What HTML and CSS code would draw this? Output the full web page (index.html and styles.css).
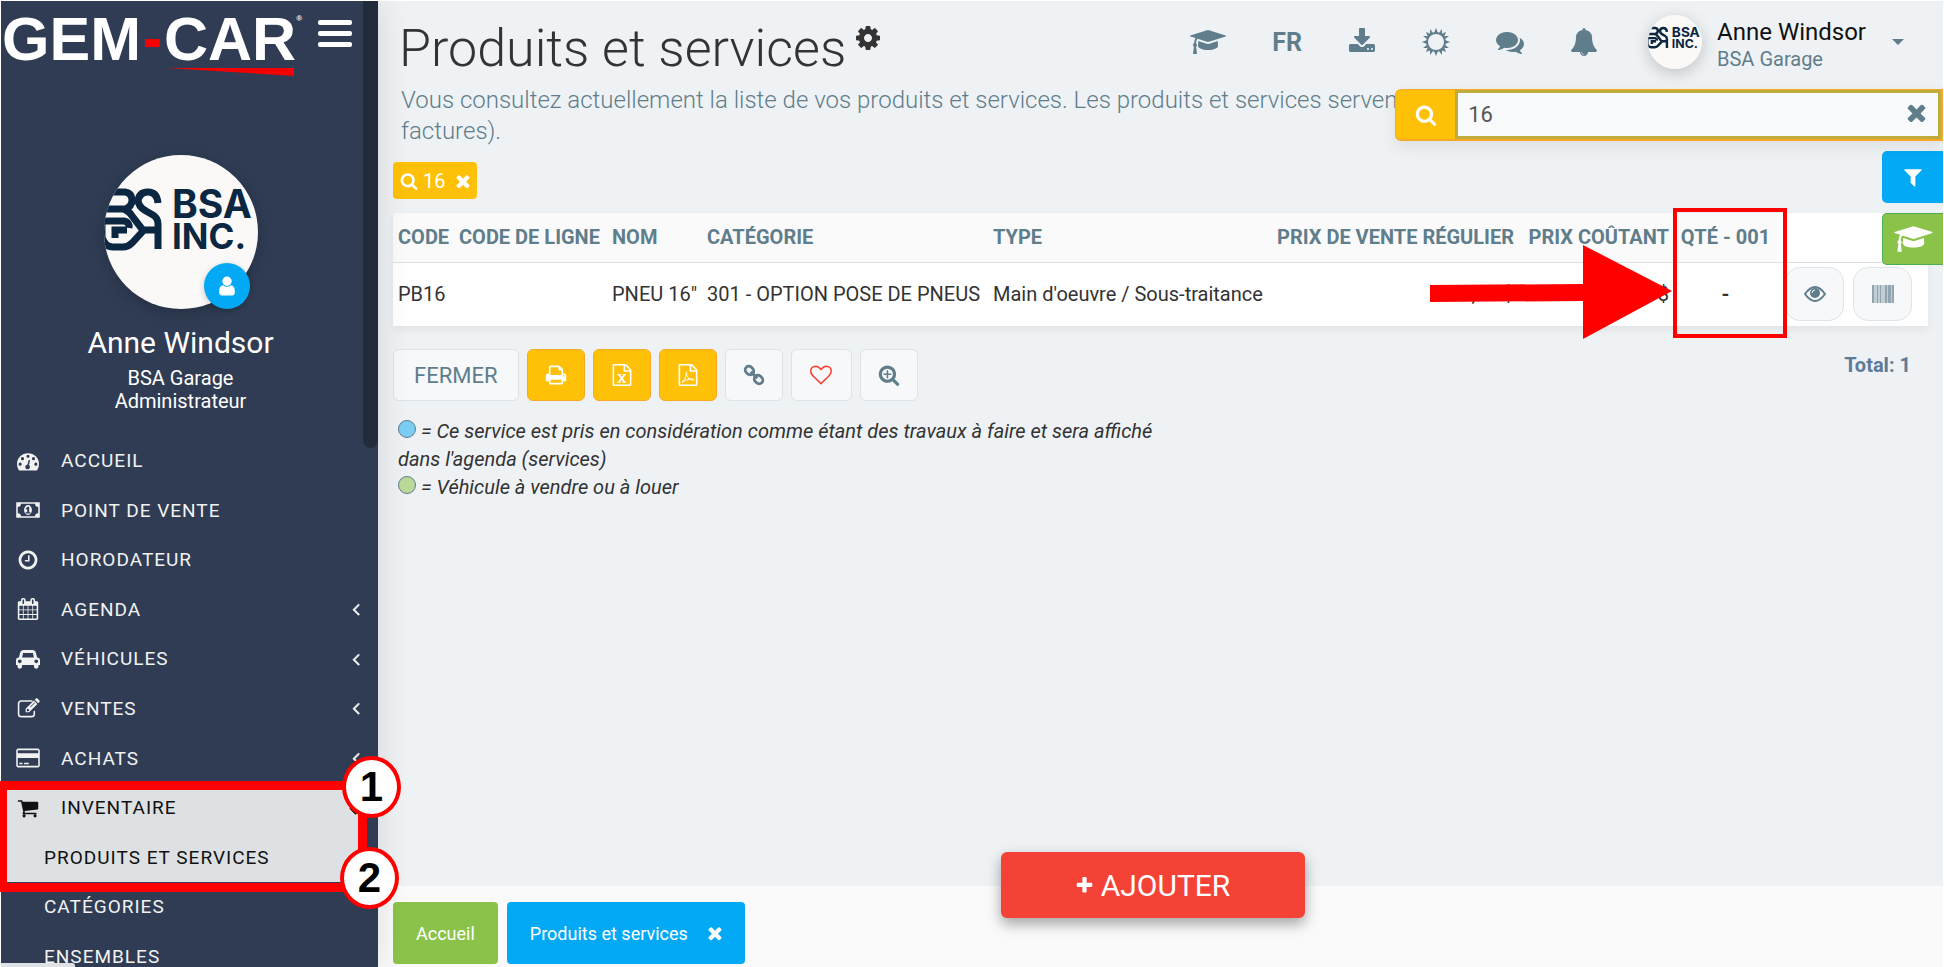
FILE: index.html
```html
<!DOCTYPE html>
<html lang="fr">
<head>
    <meta charset="UTF-8">
    <meta name="viewport" content="width=device-width, initial-scale=1.0">
    <title>GEM-CAR - Produits et services</title>
    <link rel="stylesheet" href="styles.css">
</head>
<body>
    <!-- Shared icons -->
    <svg class="sprite" aria-hidden="true">
        <symbol id="i-search" viewBox="0 0 1792 1792"><path d="M1216 832q0-185-131.500-316.500t-316.500-131.500-316.500 131.500-131.500 316.500 131.500 316.500 316.500 131.500 316.500-131.500 131.500-316.500zm512 832q0 52-38 90t-90 38q-54 0-90-38l-343-342q-179 124-399 124-143 0-273.500-55.500t-225-150-150-225-55.500-273.500 55.500-273.500 150-225 225-150 273.500-55.500 273.500 55.500 225 150 150 225 55.500 273.500q0 220-124 399l343 343q37 37 37 90z"/></symbol>
        <symbol id="i-times" viewBox="256 256 1280 1280"><path d="M1490 1322q0 40-28 68l-136 136q-28 28-68 28t-68-28l-294-294-294 294q-28 28-68 28t-68-28l-136-136q-28-28-28-68t28-68l294-294-294-294q-28-28-28-68t28-68l136-136q28-28 68-28t68 28l294 294 294-294q28-28 68-28t68 28l136 136q28 28 28 68t-28 68l-294 294 294 294q28 28 28 68z"/></symbol>
        <symbol id="i-cap" viewBox="0 0 2304 1792"><path d="M1774 836l18 316q4 69-82 128t-235 93.500-323 34.500-323-34.500-235-93.500-82-128l18-316 574 181q22 7 48 7t48-7zm530-324q0 23-22 31l-1120 352q-4 1-10 1t-10-1l-652-206q-43 34-71 111.500t-34 178.500q63 36 63 109 0 69-58 107l58 433q2 14-8 25-9 11-24 11h-192q-15 0-24-11-10-11-8-25l58-433q-58-38-58-107 0-73 65-111 11-207 98-330l-333-104q-22-8-22-31t22-31l1120-352q4-1 10-1t10 1l1120 352q22 8 22 31z"/></symbol>
        <symbol id="i-left" viewBox="0 0 1792 1792"><path stroke="currentColor" stroke-width="60" d="M1203 544q0 13-10 23l-393 393 393 393q10 10 10 23t-10 23l-50 50q-10 10-23 10t-23-10l-466-466q-10-10-10-23t10-23l466-466q10-10 23-10t23 10l50 50q10 10 10 23z"/></symbol>
        <symbol id="i-file" viewBox="0 0 1792 1792"><path d="M1596 380q28 28 48 76t20 88v1152q0 40-28 68t-68 28h-1344q-40 0-68-28t-28-68v-1600q0-40 28-68t68-28h896q40 0 88 20t76 48zm-444-244v376h376q-10-29-22-41l-313-313q-12-12-41-22zm384 1528v-1024h-416q-40 0-68-28t-28-68v-416h-768v1536h1280z"/></symbol>
        <symbol id="i-bsa" viewBox="0 0 154 154">
            <rect width="154" height="154" fill="#faf9f7"/>
            <g fill="none" stroke="#0b2742" stroke-width="7">
                <path d="M4 37h17q7 1 7 8t-7 9H0M20 54q6 3 8 7l10 13M0 66h20q6 1 5 7"/>
                <path d="M34 48q0-11 10-11 9 0 10 11M34 44q0 8 8 12l7 4q5 3 5 9v25"/>
                <path d="M54 75H40L28 88q-4 4-9 4H9q-8 0-11-10V64M11 83v-8h12"/>
            </g>
        </symbol>
    </svg>

    <aside class="sidebar">
        <div class="brand">
            <a href="#" class="logo"><span>GEM</span><i></i><span>CAR</span><sup>®</sup></a>
            <button class="menu-toggle" aria-label="Menu"><span></span><span></span><span></span></button>
        </div>

        <!-- Profile -->
        <div class="profile">
            <div class="profile-picture">
                <svg class="avatar" viewBox="0 0 154 154">
                    <use href="#i-bsa"/>
                    <text x="68" y="63" class="bsa-text bsa-top">BSA</text>
                    <text x="68" y="94" class="bsa-text">INC.</text>
                </svg>
                <button class="profile-edit" aria-label="Profil">
                    <svg viewBox="0 0 1792 1792"><path d="M1536 1399q0 109-62.500 187t-150.500 78h-854q-88 0-150.500-78t-62.500-187q0-85 8.500-160.500t31.500-152 58.500-131 94-89 134.500-34.500q131 128 313 128t313-128q76 0 134.500 34.500t94 89 58.500 131 31.500 152 8.500 160.500zm-256-887q0 159-112.500 271.500t-271.500 112.500-271.500-112.500-112.500-271.500 112.500-271.500 271.500-112.500 271.500 112.500 112.500 271.500z"/></svg>
                </button>
            </div>
            <div class="profile-name">Anne Windsor</div>
            <div class="profile-info">BSA Garage</div>
            <div class="profile-info">Administrateur</div>
        </div>

        <!-- Navigation -->
        <nav class="nav">
            <a href="#">
                <svg viewBox="0 0 1792 1792"><path fill-rule="evenodd" d="M0 1152a896 896 0 0 1 1792 0q0 261-141 483-19 29-54 29H195q-35 0-54-29Q0 1414 0 1152zM256 1024a128 128 0 1 0 0 256 128 128 0 1 0 0-256zM448 576a128 128 0 1 0 0 256 128 128 0 1 0 0-256zM896 384a128 128 0 1 0 0 256 128 128 0 1 0 0-256zM1344 576a128 128 0 1 0 0 256 128 128 0 1 0 0-256zM1536 1024a128 128 0 1 0 0 256 128 128 0 1 0 0-256zM950 810l-101 382a192 192 0 1 0 124 33l101-382z"/></svg>
                Accueil
            </a>
            <a href="#">
                <svg viewBox="0 0 1920 1792"><path fill-rule="evenodd" d="M0 256h1920v1280H0zM384 384q0 256-256 256v512q256 0 256 256h1152q0-256 256-256V640q-256 0-256-256zM960 480a320 416 0 1 0 0 832 320 416 0 1 0 0-832zM768 768l160-128h128v448h96v96H768v-96h128V800l-64 48z"/></svg>
                Point de vente
            </a>
            <a href="#">
                <svg viewBox="0 0 1792 1792"><path d="M1024 544v448q0 14-9 23t-23 9h-320q-14 0-23-9t-9-23v-64q0-14 9-23t23-9h224v-352q0-14 9-23t23-9h64q14 0 23 9t9 23zm416 352q0-148-73-273t-198-198-273-73-273 73-198 198-73 273 73 273 198 198 273 73 273-73 198-198 73-273zm224 0q0 209-103 385.500t-279.500 279.500-385.500 103-385.500-103-279.500-279.500-103-385.500 103-385.500 279.500-279.500 385.500-103 385.500 103 279.500 279.500 103 385.500z"/></svg>
                Horodateur
            </a>
            <a href="#">
                <svg viewBox="0 0 1792 1792"><path d="M192 1664h288v-288h-288v288zm352 0h320v-288h-320v288zm-352-352h288v-320h-288v320zm352 0h320v-320h-320v320zm-352-384h288v-288h-288v288zm736 736h320v-288h-320v288zm-384-736h320v-288h-320v288zm768 736h288v-288h-288v288zm-384-352h320v-320h-320v320zm-352-864v-288q0-13-9.500-22.500t-22.500-9.500h-64q-13 0-22.500 9.500t-9.500 22.500v288q0 13 9.500 22.500t22.500 9.500h64q13 0 22.500-9.500t9.500-22.500zm736 864h288v-320h-288v320zm-384-384h320v-288h-320v288zm384 0h288v-288h-288v288zm32-480v-288q0-13-9.500-22.500t-22.500-9.500h-64q-13 0-22.500 9.500t-9.500 22.500v288q0 13 9.500 22.500t22.500 9.500h64q13 0 22.500-9.500t9.500-22.500zm384-64v1280q0 52-38 90t-90 38h-1408q-52 0-90-38t-38-90v-1280q0-52 38-90t90-38h128v-96q0-66 47-113t113-47h64q66 0 113 47t47 113v96h384v-96q0-66 47-113t113-47h64q66 0 113 47t47 113v96h128q52 0 90 38t38 90z"/></svg>
                Agenda
                <svg class="arrow"><use href="#i-left"/></svg>
            </a>
            <a href="#">
                <svg viewBox="0 0 2048 1792"><path d="M480 1088q0-66-47-113t-113-47-113 47-47 113 47 113 113 47 113-47 47-113zm36-320h1016l-89-357q-2-8-14-17.500t-21-9.500h-768q-9 0-21 9.500t-14 17.500zm1372 320q0-66-47-113t-113-47-113 47-47 113 47 113 113 47 113-47 47-113zm160-96v384q0 14-9 23t-23 9h-96v128q0 80-56 136t-136 56-136-56-56-136v-128h-1024v128q0 80-56 136t-136 56-136-56-56-136v-128h-96q-14 0-23-9t-9-23v-384q0-93 65.500-158.500t158.500-65.500h28l105-419q23-94 104-157.500t179-63.500h768q98 0 179 63.500t104 157.500l105 419h28q93 0 158.500 65.500t65.500 158.500z"/></svg>
                Véhicules
                <svg class="arrow"><use href="#i-left"/></svg>
            </a>
            <a href="#">
                <svg viewBox="0 0 1792 1792"><path fill="none" stroke="currentColor" stroke-width="128" stroke-linecap="round" d="M1216 320H352q-224 0-224 224v832q0 224 224 224h832q224 0 224-224v-190"/><path fill-rule="evenodd" d="M1372 292l288 288-672 672H700V964zM1420 452l-350 350 40 40 350-350zM800 1010v142h142l70-70-142-142zM1444 220l92-92q28-28 68-28t68 28l152 152q28 28 28 68t-28 68l-92 92z"/></svg>
                Ventes
                <svg class="arrow"><use href="#i-left"/></svg>
            </a>
            <a href="#">
                <svg viewBox="0 0 1920 1792"><path d="M1760 128q66 0 113 47t47 113v1216q0 66-47 113t-113 47h-1600q-66 0-113-47t-47-113v-1216q0-66 47-113t113-47h1600zm-1600 128q-13 0-22.500 9.500t-9.500 22.500v224h1664v-224q0-13-9.500-22.500t-22.500-9.500h-1600zm1600 1280q13 0 22.500-9.500t9.500-22.500v-608h-1664v608q0 13 9.500 22.500t22.500 9.500h1600zm-1504-128v-128h256v128h-256zm384 0v-128h384v128h-384z"/></svg>
                Achats
                <svg class="arrow"><use href="#i-left"/></svg>
            </a>
            <a href="#" class="active">
                <svg viewBox="0 0 1792 1792"><path d="M704 1536q0 52-38 90t-90 38-90-38-38-90 38-90 90-38 90 38 38 90zm896 0q0 52-38 90t-90 38-90-38-38-90 38-90 90-38 90 38 38 90zm128-1088v512q0 24-16.500 42.500t-40.500 21.500l-1044 122q13 60 13 70 0 16-24 64h920q26 0 45 19t19 45-19 45-45 19h-1024q-26 0-45-19t-19-45q0-11 8-31.500t16-36 21.500-40 15.500-29.500l-177-823h-204q-26 0-45-19t-19-45 19-45 45-19h256q16 0 28.500 6.500t19.500 15.500 13 24.500 8 26 5.500 29.500 4.500 26h1201q26 0 45 19t19 45z"/></svg>
                Inventaire
                <svg class="arrow"><use href="#i-left"/></svg>
            </a>
            <a href="#" class="sub active">Produits et services</a>
            <a href="#" class="sub">Catégories</a>
            <a href="#" class="sub">Ensembles</a>
            <div class="nav-highlight"></div>
            <span class="step step-one">1</span>
            <span class="step step-two">2</span>
        </nav>
        <div class="sidebar-scroll"></div>
        <div class="status-bar"></div>
    </aside>

    <main class="main">
        <header class="header">
            <h1>Produits et services <svg viewBox="0 0 1792 1792"><path d="M1152 896q0-106-75-181t-181-75-181 75-75 181 75 181 181 75 181-75 75-181zm512-109v222q0 12-8 23t-20 13l-185 28q-19 54-39 91 35 50 107 138 10 12 10 25t-9 23q-27 37-99 108t-94 71q-12 0-26-9l-138-108q-44 23-91 38-16 136-29 186-7 28-36 28h-222q-14 0-24.500-8.500t-11.500-21.500l-28-184q-49-16-90-37l-141 107q-10 9-25 9-14 0-25-11-126-114-165-168-7-10-7-23 0-12 8-23 15-21 51-66.500t54-70.500q-27-50-41-99l-183-27q-13-2-21-12.500t-8-23.500v-222q0-12 8-23t19-13l186-28q14-46 39-92-40-57-107-138-10-12-10-24 0-10 9-23 26-36 98.500-107.500t94.500-71.500q13 0 26 10l138 107q44-23 91-38 16-136 29-186 7-28 36-28h222q14 0 24.500 8.500t11.500 21.500l28 184q49 16 90 37l142-107q9-9 24-9 13 0 25 10 129 119 165 170 7 8 7 22 0 12-8 23-15 21-51 66.500t-54 70.500q26 50 41 98l183 28q13 2 21 12.500t8 23.500z"/></svg></h1>
            <div class="top-menu">
                <a href="#" aria-label="Formation"><svg class="wide" viewBox="0 0 2304 1792"><use href="#i-cap"/></svg></a>
                <a href="#" class="lang">FR</a>
                <a href="#" aria-label="Téléchargements"><svg viewBox="0 0 1792 1792"><path d="M1344 1344q0-26-19-45t-45-19-45 19-19 45 19 45 45 19 45-19 19-45zm256 0q0-26-19-45t-45-19-45 19-19 45 19 45 45 19 45-19 19-45zm128-224v320q0 40-28 68t-68 28h-1472q-40 0-68-28t-28-68v-320q0-40 28-68t68-28h465l135 136q58 56 136 56t136-56l136-136h464q40 0 68 28t28 68zm-325-569q17 41-14 70l-448 448q-18 19-45 19t-45-19l-448-448q-31-29-14-70 17-39 59-39h256v-448q0-26 19-45t45-19h256q26 0 45 19t19 45v448h256q42 0 59 39z"/></svg></a>
                <a href="#" aria-label="Thème"><svg viewBox="0 0 28 28"><circle cx="14" cy="14" r="9" fill="none" stroke="currentColor" stroke-width="2"/><path d="M14 0l2 5h-4zM14 28l2-5h-4zM0 14l5-2v4zM28 14l-5-2v4zM4 4l5 2-3 3zM24 4l-5 2 3 3zM4 24l5-2-3-3zM24 24l-5-2 3-3zM8 1l3 4-3 2zM20 1l-3 4 3 2zM8 27l3-4-3-2zM20 27l-3-4 3-2zM1 8l4 3 2-3zM27 8l-4 3-2-3zM1 20l4-3 2 3zM27 20l-4-3-2 3z"/></svg></a>
                <a href="#" aria-label="Messages"><svg viewBox="0 0 1792 1792"><path d="M1408 768q0 139-94 257t-256.500 186.500-353.500 68.500q-86 0-176-16-124 88-278 128-36 9-86 16h-3q-11 0-20.500-8t-11.500-21q-1-3-1-6.500t.5-6.500 2-6l2.500-5 3.500-5.500 4-5 4.500-5 4-4.500q5-6 23-25t26-29.500 22.500-29 25-38.500 20.500-44q-124-72-195-177t-71-224q0-139 94-257t256.500-186.500 353.500-68.500 353.500 68.500 256.500 186.500 94 257zm384 256q0 120-71 224.500t-195 176.500q10 24 20.500 44t25 38.500 22.500 29 26 29.500 23 25q1 1 4 4.500t4.500 5 4 5 3.500 5.500l2.500 5 2 6 .5 6.500-1 6.500q-3 14-13 22t-22 7q-50-7-86-16-154-40-278-128-90 16-176 16-271 0-472-132 58 4 88 4 161 0 309-45t264-129q125-92 192-212t67-254q0-77-23-152 129 71 204 178t75 230z"/></svg></a>
                <a href="#" aria-label="Notifications"><svg viewBox="0 0 1792 1792"><path d="M912 1696q0-16-16-16-59 0-101.500-42.500t-42.500-101.500q0-16-16-16t-16 16q0 73 51.500 124.500t124.500 51.500q16 0 16-16zm816-288q0 52-38 90t-90 38h-448q0 106-75 181t-181 75-181-75-75-181h-448q-52 0-90-38t-38-90q50-42 91-88t85-119.500 74.500-158.500 50-206 19.500-260q0-152 117-282.500t307-158.500q-8-19-8-39 0-40 28-68t68-28 68 28 28 68q0 20-8 39 190 28 307 158.500t117 282.500q0 139 19.500 260t50 206 74.500 158.500 85 119.500 91 88z"/></svg></a>
                <a href="#" class="account">
                    <svg class="avatar" viewBox="0 0 154 154">
                        <use href="#i-bsa"/>
                        <text x="68" y="63" class="bsa-text bsa-top">BSA</text>
                        <text x="68" y="94" class="bsa-text">INC.</text>
                    </svg>
                    <span class="account-text"><strong>Anne Windsor</strong><small>BSA Garage</small></span>
                    <span class="caret"></span>
                </a>
            </div>
        </header>

        <p class="description">Vous consultez actuellement la liste de vos produits et services. Les produits et services servent<br>factures).</p>

        <button class="chip"><svg><use href="#i-search"/></svg>16<svg class="chip-close"><use href="#i-times"/></svg></button>

        <!-- Search and side buttons -->
        <div class="side-tools">
            <form class="search">
                <button type="button" class="search-button" aria-label="Rechercher"><svg><use href="#i-search"/></svg></button>
                <input type="text" value="16" aria-label="Recherche">
                <button type="button" class="search-clear" aria-label="Effacer"><svg><use href="#i-times"/></svg></button>
            </form>
            <button class="side-button" aria-label="Filtres"><svg viewBox="0 0 1792 1792"><path d="M1595 295q17 41-14 70l-493 493v742q0 42-39 59-13 5-25 5-27 0-45-19l-256-256q-19-19-19-45v-486l-493-493q-31-29-14-70 17-39 59-39h1280q42 0 59 39z"/></svg></button>
            <button class="side-button green" aria-label="Aide"><svg viewBox="0 0 2304 1792"><use href="#i-cap"/></svg></button>
        </div>

        <!-- Products -->
        <div class="table-wrap">
            <table>
                <colgroup>
                    <col class="c-code"><col class="c-line"><col class="c-name"><col class="c-cat"><col><col class="c-price"><col class="c-cost"><col class="c-qty"><col class="c-actions">
                </colgroup>
                <thead>
                    <tr>
                        <th>CODE</th>
                        <th>CODE DE LIGNE</th>
                        <th>NOM</th>
                        <th>CATÉGORIE</th>
                        <th>TYPE</th>
                        <th class="right">PRIX DE VENTE RÉGULIER</th>
                        <th class="right">PRIX COÛTANT</th>
                        <th class="center">QTÉ - 001</th>
                        <td></td>
                    </tr>
                </thead>
                <tbody>
                    <tr>
                        <td>PB16</td>
                        <td></td>
                        <td>PNEU 16"</td>
                        <td>301 - OPTION POSE DE PNEUS</td>
                        <td>Main d'oeuvre / Sous-traitance</td>
                        <td class="right">0,00 $</td>
                        <td class="right">0,00 $</td>
                        <td class="center"><b>-</b></td>
                        <td>
                            <div class="actions">
                                <button aria-label="Voir"><svg viewBox="0 0 24 18"><path fill="none" stroke="currentColor" stroke-width="2" d="M2 9Q12-5 22 9 12 23 2 9z"/><circle cx="12" cy="8" r="5"/><path fill="none" stroke="#f7f8fa" d="M9 8q0-3 3-3"/></svg></button>
                                <button aria-label="Code-barres"><svg viewBox="0 0 24 18"><path opacity=".35" d="M1 0h22v18H1z"/><path opacity=".5" d="M1 0h2v18H1zM6 0h1v18H6zM9 0h1v18H9zM14 0h2v18h-2zM17 0h3v18h-3zM21 0h2v18h-2z"/></svg></button>
                            </div>
                        </td>
                    </tr>
                </tbody>
            </table>
            <svg class="mark-arrow" viewBox="0 0 242 94"><path d="M0 40l153-1V0l89 46-89 48V56l-153 1z"/></svg>
            <div class="mark-box"></div>
        </div>

        <div class="toolbar">
            <button class="btn close">FERMER</button>
            <button class="btn yellow" aria-label="Imprimer"><svg viewBox="0 0 1792 1792"><path d="M448 1536h896v-256h-896v256zm0-640h896v-384h-160q-40 0-68-28t-28-68v-160h-640v640zm1152 64q0-26-19-45t-45-19-45 19-19 45 19 45 45 19 45-19 19-45zm128 0v416q0 13-9.500 22.500t-22.500 9.500h-224v160q0 40-28 68t-68 28h-960q-40 0-68-28t-28-68v-160h-224q-13 0-22.500-9.500t-9.500-22.500v-416q0-79 56.500-135.500t135.500-56.500h64v-544q0-40 28-68t68-28h672q40 0 88 20t76 48l152 152q28 28 48 76t20 88v256h64q79 0 135.500 56.500t56.500 135.500z"/></svg></button>
            <button class="btn yellow" aria-label="Excel"><svg viewBox="0 0 1792 1792"><use href="#i-file"/><path fill="none" stroke="currentColor" stroke-width="150" d="M640 860l460 620M1110 860l-460 620"/><path fill="none" stroke="currentColor" stroke-width="90" d="M500 850h320M960 850h260M500 1490h280M920 1490h320"/></svg></button>
            <button class="btn yellow" aria-label="PDF"><svg viewBox="0 0 1792 1792"><use href="#i-file"/><path fill="none" stroke="currentColor" stroke-width="80" d="M400 1500q250-150 400-700 20-120-30-120-60 0-30 140 80 370 440 480 180 50 200-20-20-90-360-40-360 50-620 260z"/></svg></button>
            <button class="btn" aria-label="Lien"><svg viewBox="0 0 24 24"><g fill="none" stroke="currentColor" stroke-width="3" transform="rotate(45 12 12)"><rect x="0" y="8" width="10" height="8" rx="4"/><rect x="14" y="8" width="10" height="8" rx="4"/><path d="M7 12h10"/></g></svg></button>
            <button class="btn heart" aria-label="Favori"><svg viewBox="0 0 1792 1792"><path d="M1664 596q0-81-21.500-143t-55-98.500-81.500-59.500-94-31-98-8-112 25.500-110.500 64-86.500 72-60 61.500q-18 22-49 22t-49-22q-24-28-60-61.500t-86.500-72-110.500-64-112-25.500-98 8-94 31-81.500 59.500-55 98.500-21.500 143q0 168 187 355l581 560 580-559q188-188 188-356zm128 0q0 221-229 450l-623 600q-18 18-44 18t-44-18l-624-602q-10-8-27.500-26t-55.500-65.500-68-97.500-53.500-121-23.500-138q0-220 127-344t351-124q62 0 126.500 21.500t120 58 95.500 68.500 76 68q36-36 76-68t95.500-68.500 120-58 126.500-21.500q224 0 351 124t127 344z"/></svg></button>
            <button class="btn" aria-label="Zoom"><svg viewBox="0 0 1792 1792"><use href="#i-search"/><path d="M704 512h128v256h256v128H832v256H704V896H448V768h256z"/></svg></button>
            <span class="total">Total: 1</span>
        </div>

        <div class="legend">
            <div><i class="dot blue"></i> = Ce service est pris en considération comme étant des travaux à faire et sera affiché dans l'agenda (services)</div>
            <div><i class="dot lime"></i> = Véhicule à vendre ou à louer</div>
        </div>

        <footer class="footer">
            <a href="#" class="tab green">Accueil</a>
            <a href="#" class="tab">Produits et services <svg><use href="#i-times"/></svg></a>
            <div class="add-wrap">
                <button class="add"><svg viewBox="128 128 1536 1536"><path d="M1600 736v192q0 40-28 68t-68 28h-416v416q0 40-28 68t-68 28h-192q-40 0-68-28t-28-68v-416h-416q-40 0-68-28t-28-68v-192q0-40 28-68t68-28h416v-416q0-40 28-68t68-28h192q40 0 68 28t28 68v416h416q40 0 68 28t28 68z"/></svg>AJOUTER</button>
            </div>
        </footer>
    </main>
</body>
</html>
```
FILE: styles.css
```css
* {
    box-sizing: border-box;
}

body {
    margin: 0;
    display: flex;
    min-height: 100vh;
    background-color: #eef2f5;
    color: #333;
    font-family: Roboto, "Liberation Sans", sans-serif;
    font-size: 20px;
}

a {
    color: inherit;
    text-decoration: none;
}

button {
    border: none;
    padding: 0;
    font-family: inherit;
    color: inherit;
    cursor: pointer;
}

svg {
    fill: currentColor;
    flex-shrink: 0;
}

.sprite {
    position: absolute;
    width: 0;
    height: 0;
}

.bsa-text {
    font: bold 35px Inter, "Liberation Sans", sans-serif;
    fill: #0b2742;
}

.bsa-top {
    font-size: 39px;
}

/* Sidebar */
.sidebar {
    position: relative;
    width: 378px;
    height: 100vh;
    flex-shrink: 0;
    background-color: #2f3c53;
    color: #fff;
    box-shadow: 0 0 30px rgba(0, 0, 0, 0.12);
    z-index: 2;
    border-left: 1px solid #fff;
    border-top: 1px solid #fff;
}

.brand {
    display: flex;
    justify-content: space-between;
    padding: 8px 26px 0 1px;
    height: 100px;
}

.logo {
    position: relative;
    display: flex;
    align-items: flex-start;
    height: 67px;
    font: bold 61px/60px "Liberation Sans", Arial, sans-serif;
}

.logo i {
    width: 15px;
    height: 8px;
    margin: 30px 4px 0 4px;
    background-color: #f40000;
}

.logo sup {
    font-size: 8px;
    line-height: 20px;
}

.logo::after {
    content: "";
    position: absolute;
    right: 8px;
    bottom: 0;
    width: 128px;
    height: 8px;
    background-color: #f40000;
    clip-path: polygon(0 0, 100% 0, 100% 100%);
}

.menu-toggle {
    display: flex;
    flex-direction: column;
    gap: 6px;
    margin-top: 11px;
    background: none;
    height: 27px;
}

.menu-toggle span {
    width: 34px;
    height: 5px;
    border-radius: 2px;
    background-color: #fff;
}

.profile {
    padding: 54px 18px 0 0;
    text-align: center;
}

.profile-picture {
    position: relative;
    width: 154px;
    margin: 0 auto;
}

.avatar {
    display: block;
    width: 154px;
    height: 154px;
    border-radius: 50%;
    box-shadow: 0 4px 16px rgba(0, 0, 0, 0.2);
}

.profile-edit {
    position: absolute;
    right: 8px;
    bottom: 0;
    width: 46px;
    height: 46px;
    border-radius: 50%;
    background-color: #03a9f4;
    color: #fff;
    box-shadow: 0 2px 6px rgba(0, 0, 0, 0.2);
}

.profile-edit svg {
    width: 22px;
    height: 22px;
    vertical-align: middle;
}

.profile-name {
    margin-top: 14px;
    font-size: 30px;
    line-height: 40px;
}

.profile-info {
    line-height: 23px;
}

.profile-name + .profile-info {
    margin-top: 4px;
}

/* Navigation */
.nav {
    position: relative;
    display: grid;
    grid-auto-rows: 1fr;
    height: 545px;
    margin-top: 23px;
    font-size: 19px;
    letter-spacing: 1px;
    text-transform: uppercase;
    color: #f2f2f2;
}

.nav a {
    display: flex;
    align-items: center;
    padding: 0 15px;
}

.nav a svg {
    width: 24px;
    height: 22px;
    margin-right: 21px;
}

.nav a .arrow {
    width: 20px;
    height: 20px;
    margin: 0 -3px 0 auto;
}

.nav .active {
    margin-right: 20px;
    background-color: #dde1e4;
    color: #111;
}

.nav .active .arrow {
    margin-right: -20px;
}

.nav .sub {
    padding-left: 43px;
}

.nav-highlight {
    position: absolute;
    left: -3px;
    right: 11px;
    top: 345px;
    height: 111px;
    border: 9px solid #f00;
}

.step {
    position: absolute;
    width: 59px;
    height: 62px;
    border: 4px solid #f00;
    border-radius: 50%;
    background-color: #fff;
    color: #000;
    font: bold 42px/54px "Liberation Sans", Arial, sans-serif;
    letter-spacing: 0;
    text-align: center;
}

.step-one {
    top: 320px;
    right: -23px;
}

.step-two {
    top: 411px;
    right: -21px;
}

.sidebar-scroll {
    position: absolute;
    top: 0;
    right: 0;
    width: 15px;
    height: 447px;
    border-radius: 0 0 8px 8px;
    background-color: #212b3b;
}

.status-bar {
    position: absolute;
    left: 0;
    bottom: 0;
    width: 74px;
    height: 4px;
    background-color: #dee1e6;
    border-radius: 0 3px 0 0;
}

/* Main */
.main {
    position: relative;
    flex: 1;
    min-width: 0;
    display: flex;
    flex-direction: column;
    padding: 0 15px;
    border-top: 1px solid #fff;
    border-right: 1px solid #fff;
}

.header {
    display: flex;
    justify-content: space-between;
    height: 84px;
    padding: 0 24px 0 6px;
}

h1 {
    display: flex;
    gap: 8px;
    margin: 16px 0 0;
    font-size: 52px;
    font-weight: 300;
    line-height: 64px;
    white-space: nowrap;
}

h1 svg {
    width: 28px;
    height: 28px;
    margin-top: 7px;
}

.top-menu {
    display: flex;
    align-items: center;
    gap: 46px;
    height: 82px;
    color: #607d8b;
}

.top-menu svg {
    display: block;
    width: 28px;
    height: 28px;
}

.top-menu .wide {
    width: 36px;
}

.lang {
    font-size: 25px;
    font-weight: 700;
}

.top-menu .account {
    display: flex;
    align-items: center;
    gap: 15px;
    margin-left: 4px;
}

.top-menu .avatar {
    width: 54px;
    height: 54px;
}

.account-text {
    padding-top: 4px;
}

.account-text strong {
    display: block;
    color: #111;
    font-size: 24px;
    font-weight: 400;
    line-height: 30px;
}

.account-text small {
    display: block;
    font-size: 20px;
    line-height: 24px;
}

.caret {
    margin-left: 11px;
    border: 6px solid transparent;
    border-top-color: #607d8b;
    border-bottom: none;
}

.description {
    margin: 0 0 15px;
    padding: 0 8px;
    color: #607d8b;
    font-size: 24px;
    font-weight: 300;
    line-height: 31px;
    white-space: nowrap;
}

.chip {
    display: flex;
    align-items: center;
    align-self: flex-start;
    gap: 5px;
    height: 37px;
    padding: 0 7px;
    border-radius: 4px;
    background-color: #ffc107;
    color: #fff;
    font-size: 20px;
}

.chip svg {
    width: 18px;
    height: 18px;
}

.chip .chip-close {
    width: 14px;
    height: 14px;
    margin-left: 6px;
}

/* Search and side buttons */
.side-tools {
    position: absolute;
    top: 88px;
    right: 0;
    width: 35%;
    display: flex;
    flex-direction: column;
    align-items: flex-end;
    gap: 10px;
    z-index: 1;
}

.search {
    position: relative;
    display: flex;
    width: 100%;
    height: 52px;
    border: 1px solid #f9a825;
    border-bottom-width: 2px;
    border-right-width: 2px;
    border-radius: 6px 0 0 6px;
    background-color: #ffc107;
    box-shadow: 0 6px 16px rgba(0, 0, 0, 0.08);
}

.search-button {
    width: 59px;
    background: none;
    color: #fff;
}

.search-button svg,
.side-button svg {
    width: 22px;
    height: 22px;
    vertical-align: middle;
}

.search input {
    flex: 1;
    min-width: 0;
    padding: 0 10px;
    border: 3px solid #c0ab3f;
    outline: none;
    background-color: #f9fafc;
    color: #555;
    font-family: inherit;
    font-size: 22px;
}

.search-clear {
    position: absolute;
    right: 15px;
    top: 13px;
    background: none;
    color: #607d8b;
}

.search-clear svg {
    display: block;
    width: 19px;
    height: 19px;
}

.side-button {
    width: 61px;
    height: 52px;
    border-radius: 5px 0 0 5px;
    background-color: #03a9f4;
    color: #fff;
}

.side-button.green {
    border: 1px solid #4caf50;
    border-right: none;
    background-color: #8bc34a;
}

.side-button.green svg {
    width: 39px;
    height: 30px;
}

/* Table */
.table-wrap {
    position: relative;
    margin-top: 14px;
    background-color: #fff;
    box-shadow: 0 4px 8px rgba(0, 0, 0, 0.06);
}

table {
    width: 100%;
    table-layout: fixed;
    border-collapse: collapse;
}

.c-code { width: 61px; }
.c-line { width: 153px; }
.c-name { width: 95px; }
.c-cat { width: 286px; }
.c-price { width: 250px; }
.c-cost { width: 155px; }
.c-qty { width: 103px; }
.c-actions { width: 151px; }

th,
td {
    padding: 0 5px;
    text-align: left;
    white-space: nowrap;
}

th {
    height: 49px;
    background-color: #fafafa;
    color: #607d8b;
    font-weight: 700;
}

thead tr {
    border-bottom: 1px solid #dde1e2;
}

tbody td {
    height: 127px;
    height: 64px;
}

.right {
    text-align: right;
}

.center {
    text-align: center;
}

.actions {
    display: flex;
    gap: 9px;
    padding-left: 3px;
}

.actions button {
    width: 59px;
    height: 54px;
    border: 1px solid #dde3e6;
    border-radius: 15px;
    background-color: #f7f8fa;
    color: #607d8b;
}

.actions svg {
    width: 24px;
    height: 18px;
    vertical-align: middle;
}

/* Marks over the table */
.mark-arrow {
    position: absolute;
    right: 256px;
    top: 32px;
    width: 242px;
    height: 94px;
    fill: #f00;
}

.mark-box {
    position: absolute;
    right: 141px;
    top: -5px;
    width: 114px;
    height: 130px;
    border: 4px solid #f00;
}

/* Toolbar */
.toolbar {
    display: flex;
    gap: 8px;
    margin-top: 23px;
}

.btn {
    width: 58px;
    height: 52px;
    border: 1px solid #dbe3e6;
    border-radius: 6px;
    background-color: #f7f8fa;
    color: #607d8b;
}

.btn svg {
    width: 22px;
    height: 22px;
    vertical-align: middle;
}

.close {
    width: auto;
    padding: 0 20px;
    font-size: 22px;
}

.yellow {
    border-color: #f9a825;
    background-color: #ffc107;
    color: #fff;
}

.heart {
    width: 61px;
    color: #f44336;
}

.total {
    margin-left: auto;
    padding: 0 17px;
    color: #5d7b99;
    font-weight: 700;
    line-height: 32px;
}

.legend {
    max-width: 770px;
    margin-top: 16px;
    padding: 0 5px;
    font-style: italic;
    line-height: 28px;
}

.dot {
    display: inline-block;
    width: 18px;
    height: 18px;
    border: 1px solid #607d8b;
    border-radius: 50%;
}

.blue {
    background-color: #7bcdf3;
}

.lime {
    background-color: #bcd99a;
}

/* Footer */
.footer {
    position: relative;
    display: flex;
    gap: 9px;
    height: 81px;
    margin: auto -15px 0;
    padding: 16px 15px 3px;
    background-color: #fafafa;
}

.tab {
    display: flex;
    align-items: center;
    padding: 0 23px;
    border-radius: 4px;
    background-color: #03a9f4;
    color: #fff;
    font-size: 18px;
}

.tab.green {
    background-color: #8bc34a;
}

.tab svg {
    width: 14px;
    height: 14px;
    margin-left: 20px;
}

.add-wrap {
    position: absolute;
    left: 0;
    right: 15px;
    top: -34px;
    display: flex;
    justify-content: center;
}

.add {
    display: flex;
    align-items: center;
    justify-content: center;
    gap: 8px;
    width: 304px;
    height: 66px;
    border-radius: 6px;
    background-color: #f44336;
    color: #fff;
    font-size: 30px;
    box-shadow: 0 6px 14px rgba(0, 0, 0, 0.35);
}

.add svg {
    width: 17px;
    height: 17px;
}
```
